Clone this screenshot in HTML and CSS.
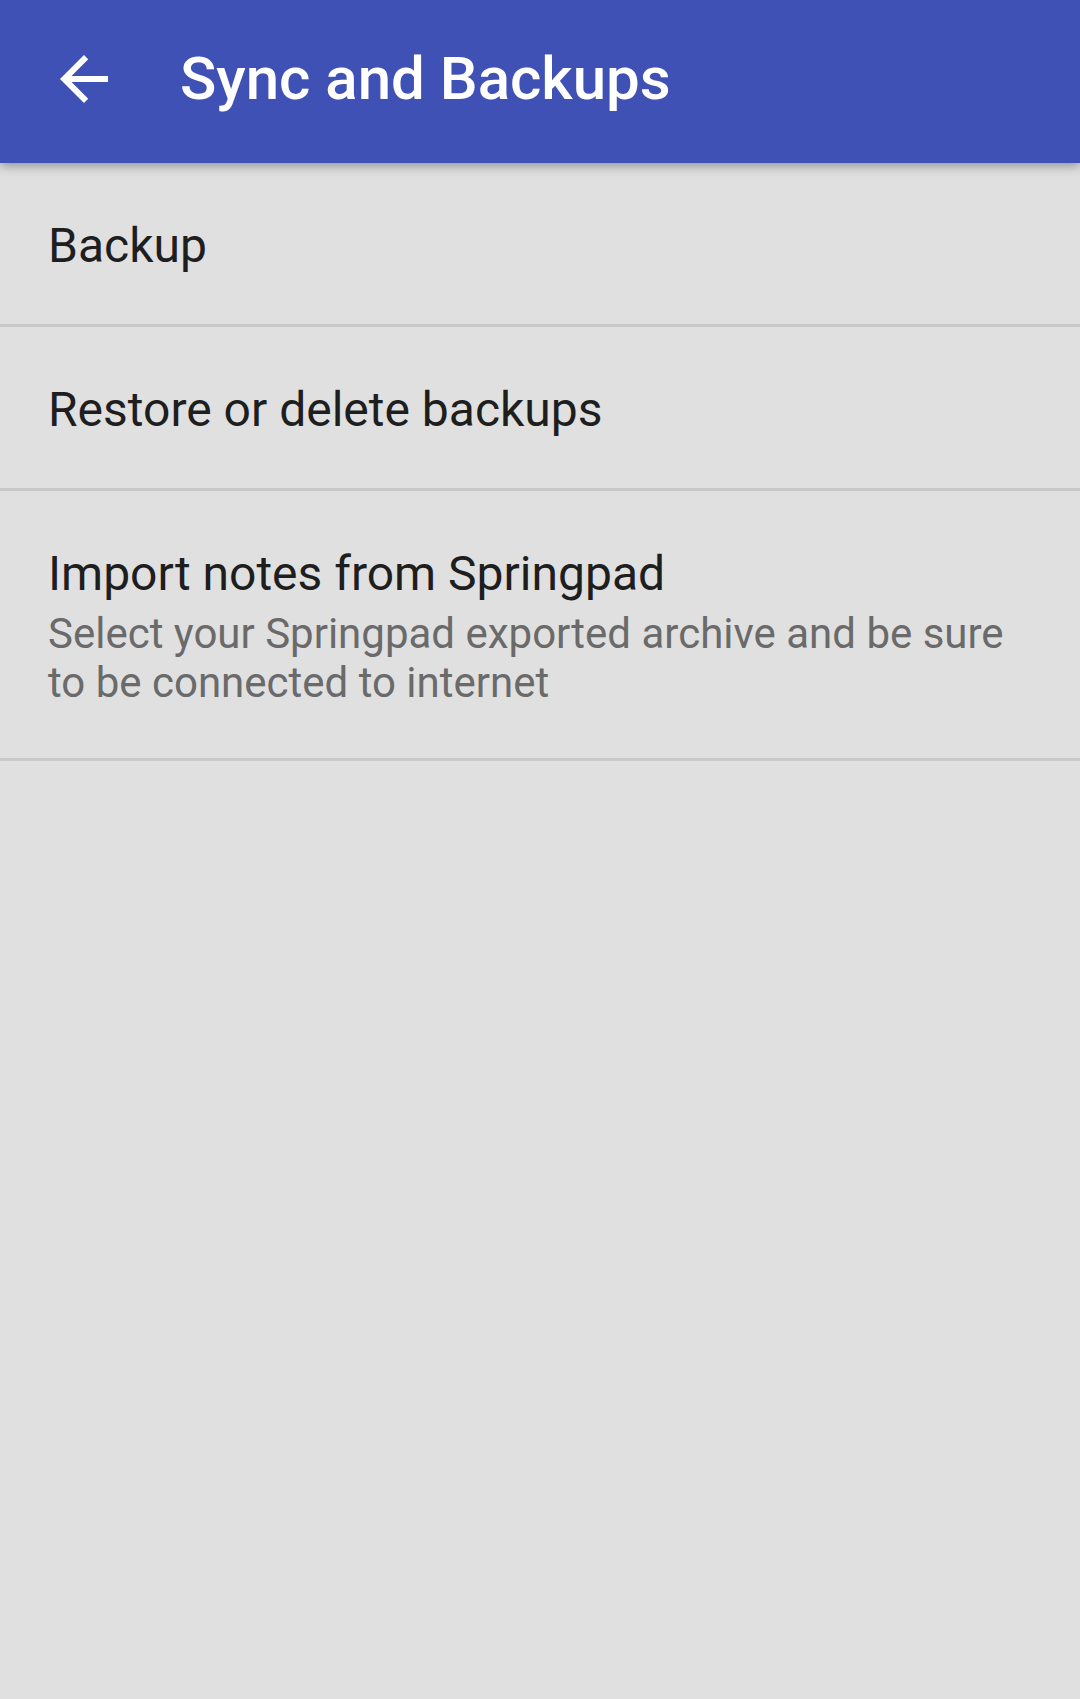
FILE: index.html
```html
<!DOCTYPE html>
<html lang="en">
<head>
<meta charset="utf-8">
<title>Sync and Backups</title>
<link rel="stylesheet" href="styles.css">
</head>
<body>
<header class="toolbar">
  <button class="nav-btn" aria-label="Back">
    <svg class="nav-icon" viewBox="0 0 24 24" width="72" height="72"><path d="M20 11H7.83l5.59-5.59L12 4l-8 8 8 8 1.41-1.41L7.83 13H20v-2z" fill="#fff"/></svg>
  </button>
  <h1 class="toolbar-title">Sync and Backups</h1>
</header>
<main class="prefs">
  <div class="pref">
    <div class="pref-title">Backup</div>
  </div>
  <div class="pref">
    <div class="pref-title">Restore or delete backups</div>
  </div>
  <div class="pref pref-multi">
    <div class="pref-title">Import notes from Springpad</div>
    <div class="pref-summary">Select your Springpad exported archive and be sure to be connected to internet</div>
  </div>
</main>
</body>
</html>
```
FILE: styles.css
```css
html, body {
  margin: 0;
  padding: 0;
}
body {
  width: 1080px;
  height: 1699px;
  background: #e0e0e0;
  font-family: Roboto, "Noto Sans", sans-serif;
  overflow: hidden;
}
.toolbar {
  height: 163px;
  background: #3f51b5;
  display: flex;
  align-items: center;
  box-shadow: 0 3px 10px rgba(0, 0, 0, 0.35);
  position: relative;
  z-index: 1;
}
.nav-btn {
  margin: -5px 0 0 48px;
  padding: 0;
  border: 0;
  background: none;
  width: 72px;
  height: 72px;
  display: flex;
}
.nav-icon {
  display: block;
}
.toolbar-title {
  margin: -5px 0 0 60px;
  color: #fff;
  font-size: 60px;
  font-weight: 500;
  line-height: 72px;
}
.prefs {
  display: flex;
  flex-direction: column;
}
.pref {
  padding: 55px 48px 50px 48px;
  border-bottom: 3px solid #c8c8c8;
}
.pref-title {
  font-size: 48px;
  line-height: 56px;
  color: #1e1e1e;
}
.pref-summary {
  margin-top: 7px;
  font-size: 42px;
  line-height: 49px;
  color: #6a6a6a;
}
.pref-multi {
  padding-bottom: 51px;
}
```
